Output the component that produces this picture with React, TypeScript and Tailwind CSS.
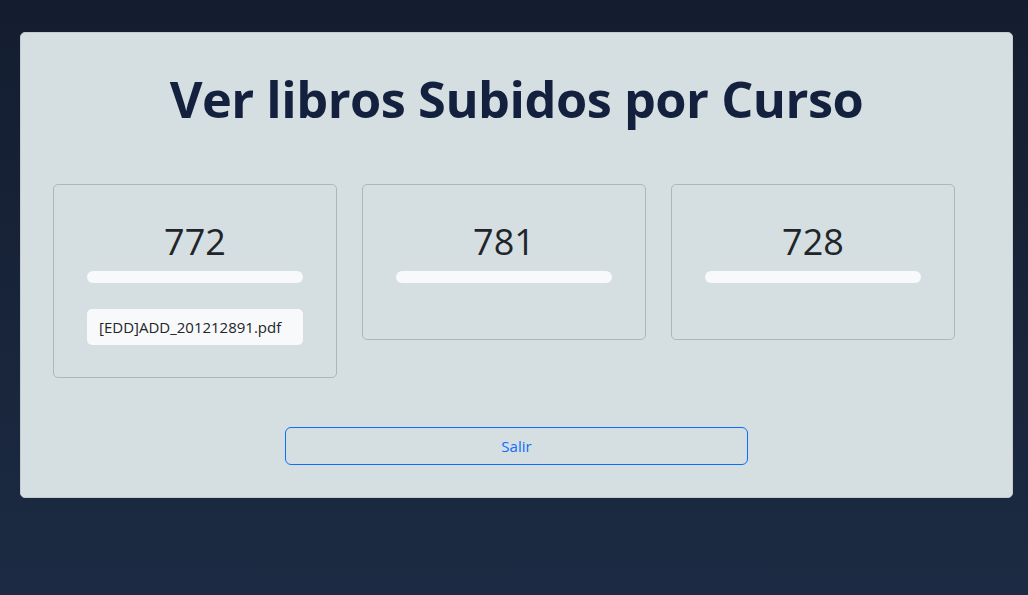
const cursos = [
  { codigo: '772', archivos: ['[EDD]ADD_201212891.pdf'] },
  { codigo: '781', archivos: [] as string[] },
  { codigo: '728', archivos: [] as string[] },
]

export default function App() {
  return (
    <div
      className="min-h-[595px] bg-gradient-to-b from-[#141d30] to-[#1c2b43] pt-[32px] pl-[20px] pr-[15px]"
      style={{ fontFamily: '"Open Sans", "Noto Sans", sans-serif' }}
    >
      <div className="w-[993px] rounded-[5px] border border-[#c3cbcf] bg-[#d5dee1] px-[32px] pb-[32px]">
        <h1 className="pt-[34px] text-center text-[50.5px] font-bold leading-[64px] tracking-[-0.5px] text-[#13213f]">
          Ver libros Subidos por Curso
        </h1>

        <div className="mt-[53px] flex items-start gap-[25px]">
          {cursos.map((curso) => (
            <div
              key={curso.codigo}
              className="w-[284px] rounded-[5px] border border-[#aeb6ba] px-[33px] pt-[33px] pb-[33px]"
            >
              <h2 className="text-center text-[36px] font-medium leading-[48px] text-[#212529]">
                {curso.codigo}
              </h2>
              <div className="mt-[5px] h-[12px] rounded-[6px] bg-[#f8f9fa]" />
              <ul className="mt-[23px] flex flex-col">
                {curso.archivos.map((archivo) => (
                  <li
                    key={archivo}
                    className="mt-[3px] -mb-[1px] h-[36px] rounded-[5px] bg-[#f8f9fa] px-[12px] text-[15px] leading-[36px] text-[#212529]"
                  >
                    {archivo}
                  </li>
                ))}
              </ul>
            </div>
          ))}
        </div>

        <div className="mt-[49px] flex justify-center">
          <button className="h-[38px] w-[463px] rounded-[6px] border border-[#0d6efd] text-[15px] text-[#0d6efd]">
            Salir
          </button>
        </div>
      </div>
    </div>
  )
}
